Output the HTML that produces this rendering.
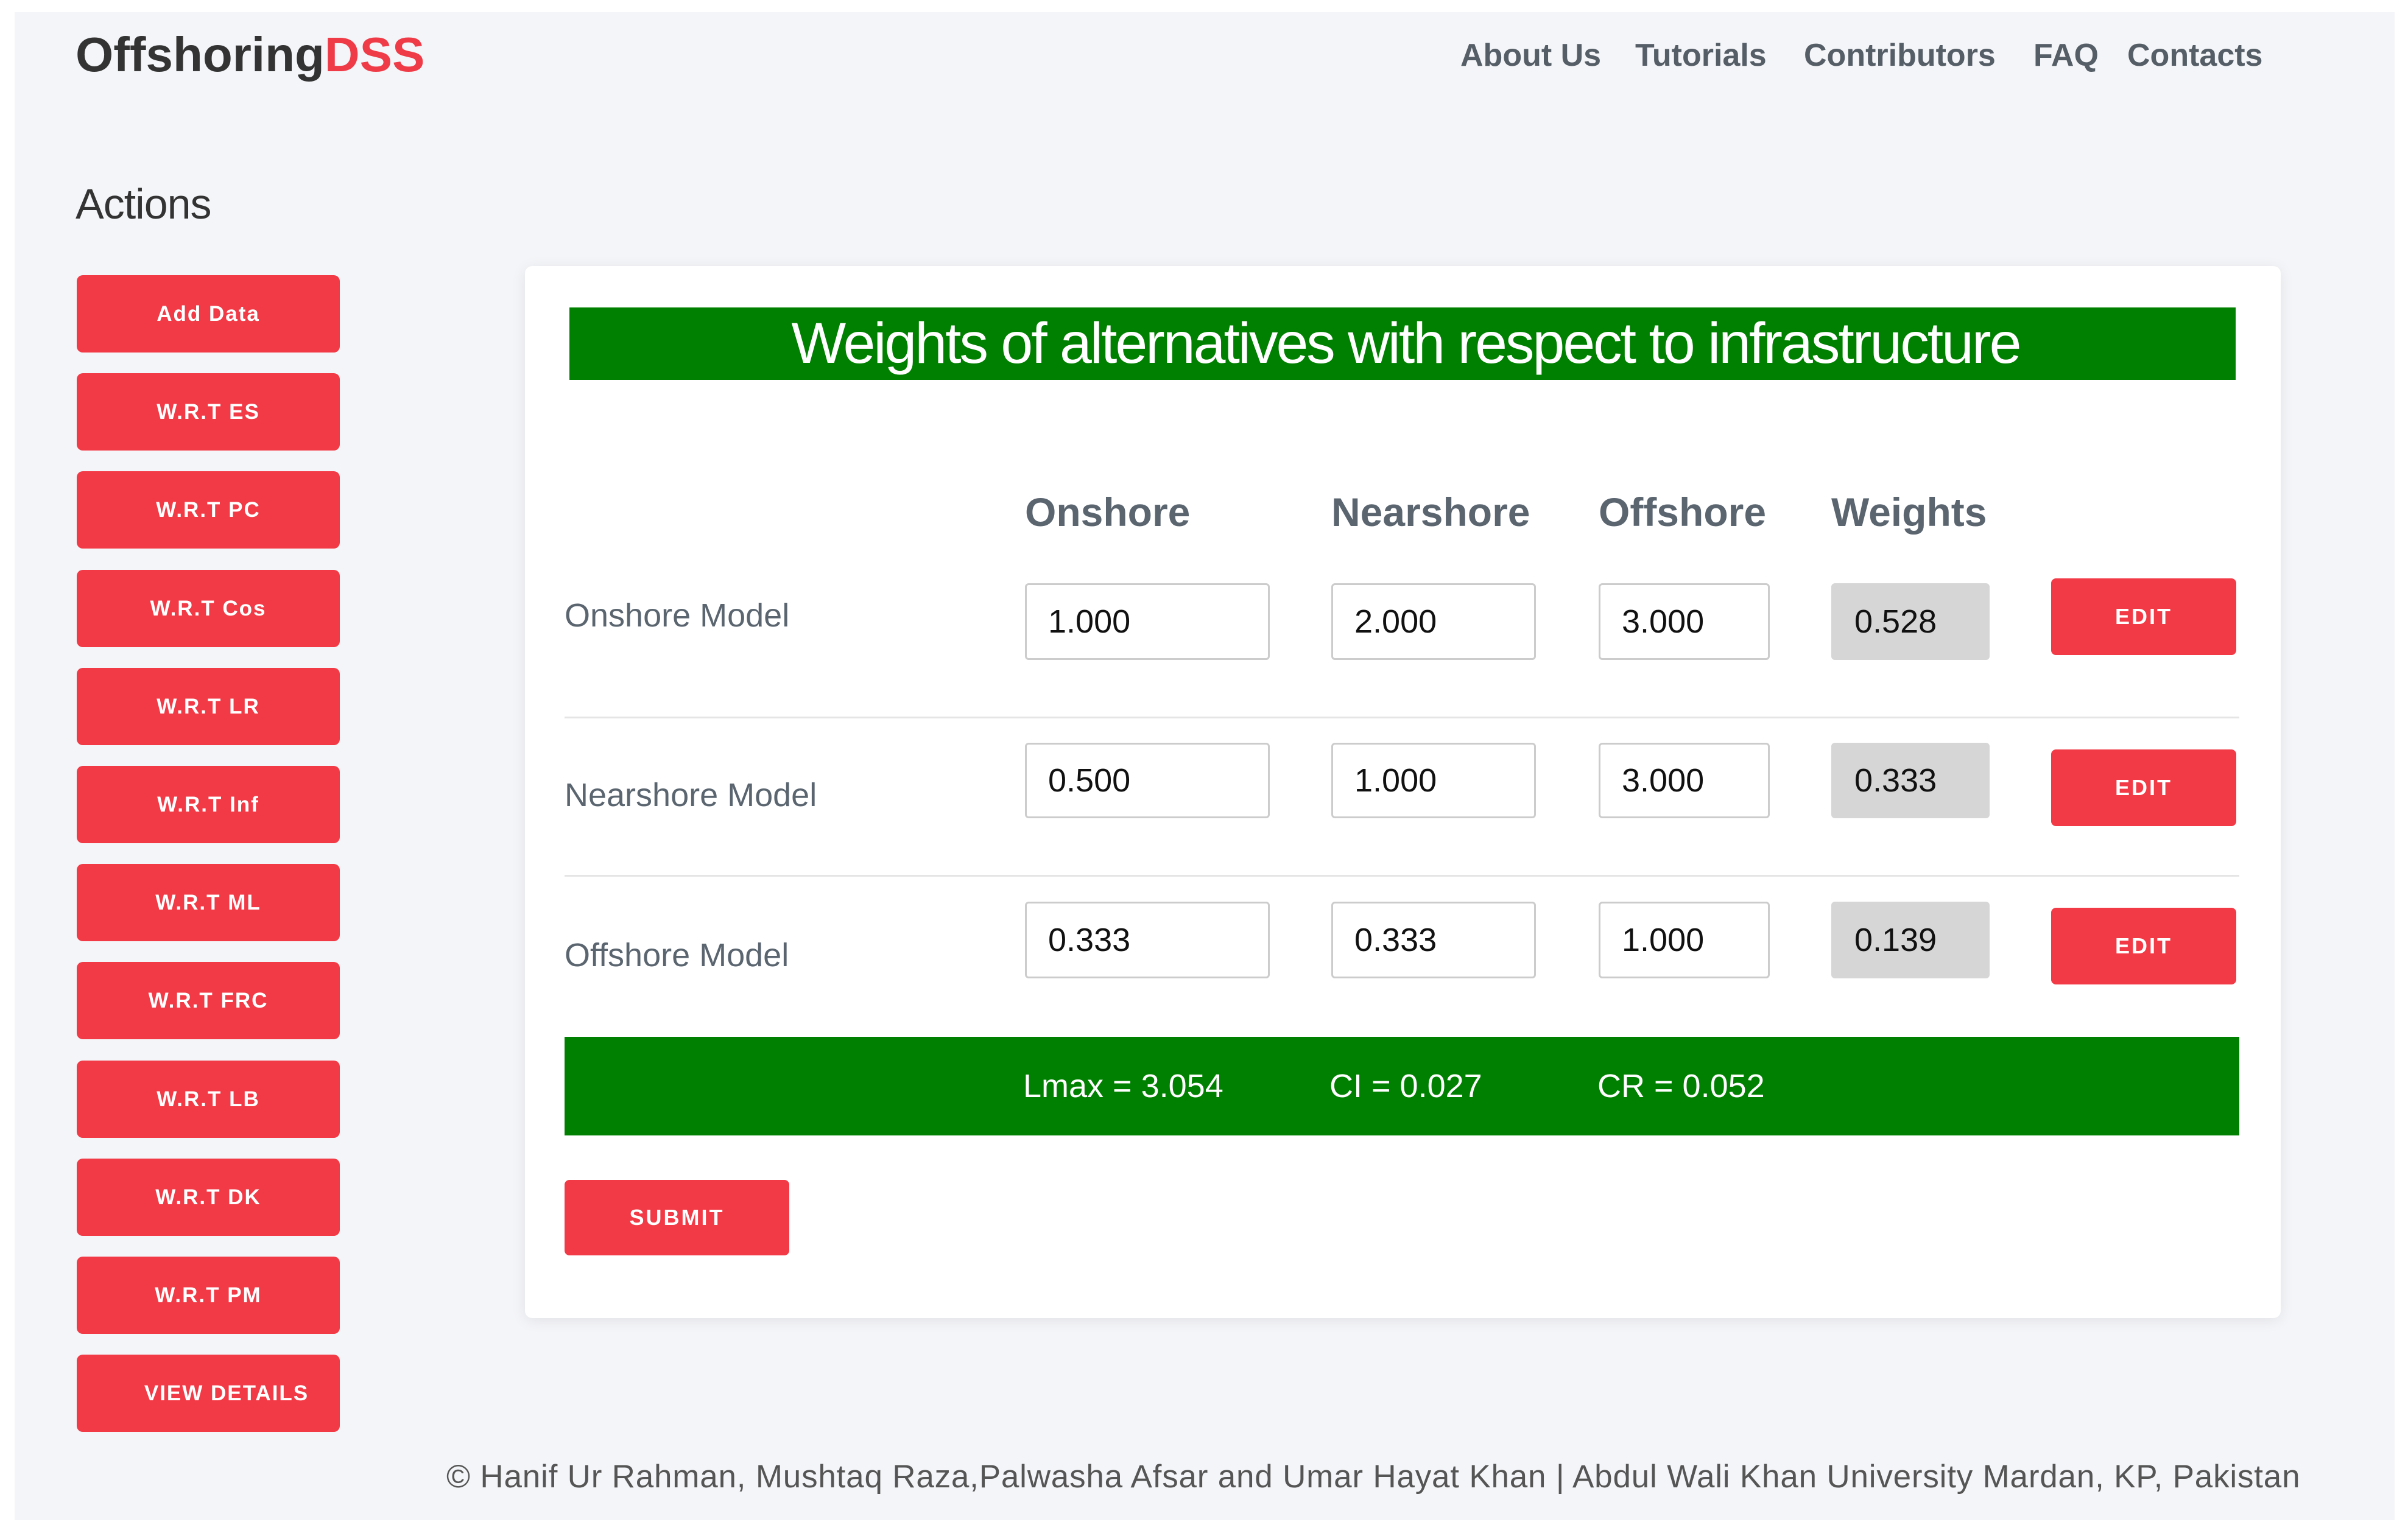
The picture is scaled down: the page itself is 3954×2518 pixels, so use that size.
<!DOCTYPE html>
<html><head><meta charset="utf-8"><style>
*{margin:0;padding:0;box-sizing:border-box}
body{width:3954px;height:2518px;background:#fff;position:relative;font-family:"Liberation Sans",Arial,sans-serif;overflow:hidden}
.abs{position:absolute}
#bg{left:24px;top:20px;width:3908px;height:2477px;background:#f4f5f8}
.logo{left:124px;top:40px;font-size:80px;font-weight:bold;color:#333;letter-spacing:0;line-height:100px}
.logo span{color:#ef3b47}
.nav{top:60px;font-size:52px;font-weight:bold;color:#555d66;line-height:62px}
.actions{left:124px;top:290px;font-size:70px;color:#333;letter-spacing:-1px;line-height:90px}
.sb{left:126px;width:432px;height:127px;background:#f23a46;border-radius:10px;color:#fff;font-weight:bold;font-size:35px;letter-spacing:2px;display:flex;align-items:center;justify-content:center}
.card{left:862px;top:437px;width:2883px;height:1728px;background:#fff;border-radius:12px;box-shadow:0 4px 24px rgba(0,0,0,0.08)}
.title{left:935px;top:505px;width:2736px;height:119px;background:#008000;color:#fff;font-size:95px;letter-spacing:-3px;display:flex;align-items:center;justify-content:center;padding-left:10px}
.hd{top:805px;font-size:66px;font-weight:bold;color:#5a6570;line-height:72px}
.lbl{left:927px;font-size:54px;color:#5a6570;line-height:60px}
.in{border:3px solid #ccc;border-radius:6px;background:#fff;font-size:54px;color:#111;padding-left:35px;display:flex;align-items:center}
.w{background:#d6d6d6;border-color:#d6d6d6}
.edit{left:3368px;width:304px;height:126px;background:#f23a46;border-radius:8px;color:#fff;font-weight:bold;font-size:36px;letter-spacing:3px;display:flex;align-items:center;justify-content:center}
.hr{left:927px;width:2750px;height:3px;background:#e5e5e5}
.bar{left:927px;top:1703px;width:2750px;height:162px;background:#008000}
.bt{top:1754px;font-size:54px;color:#fff;line-height:60px}
.foot{left:733px;top:2396px;font-size:53px;color:#555;line-height:60px;white-space:nowrap;letter-spacing:0.8px}
</style></head><body>
<div id="bg" class="abs"></div>
<div class="abs logo">Offshoring<span>DSS</span></div>
<div class="abs nav" style="left:2398px">About Us</div>
<div class="abs nav" style="left:2685px">Tutorials</div>
<div class="abs nav" style="left:2962px">Contributors</div>
<div class="abs nav" style="left:3339px">FAQ</div>
<div class="abs nav" style="left:3493px">Contacts</div>
<div class="abs actions">Actions</div>

<div class="abs sb" style="top:452px">Add Data</div>
<div class="abs sb" style="top:613px">W.R.T ES</div>
<div class="abs sb" style="top:774px">W.R.T PC</div>
<div class="abs sb" style="top:936px">W.R.T Cos</div>
<div class="abs sb" style="top:1097px">W.R.T LR</div>
<div class="abs sb" style="top:1258px">W.R.T Inf</div>
<div class="abs sb" style="top:1419px">W.R.T ML</div>
<div class="abs sb" style="top:1580px">W.R.T FRC</div>
<div class="abs sb" style="top:1742px">W.R.T LB</div>
<div class="abs sb" style="top:1903px">W.R.T DK</div>
<div class="abs sb" style="top:2064px">W.R.T PM</div>
<div class="abs sb" style="top:2225px;padding-left:60px">VIEW DETAILS</div>

<div class="abs card"></div>
<div class="abs title">Weights of alternatives with respect to infrastructure</div>

<div class="abs hd" style="left:1683px">Onshore</div>
<div class="abs hd" style="left:2186px">Nearshore</div>
<div class="abs hd" style="left:2625px">Offshore</div>
<div class="abs hd" style="left:3007px">Weights</div>

<div class="abs lbl" style="top:981px">Onshore Model</div>
<div class="abs in" style="left:1683px;top:958px;width:402px;height:126px">1.000</div>
<div class="abs in" style="left:2186px;top:958px;width:336px;height:126px">2.000</div>
<div class="abs in" style="left:2625px;top:958px;width:281px;height:126px">3.000</div>
<div class="abs in w" style="left:3007px;top:958px;width:260px;height:126px">0.528</div>
<div class="abs edit" style="top:950px">EDIT</div>
<div class="abs hr" style="top:1177px"></div>

<div class="abs lbl" style="top:1276px">Nearshore Model</div>
<div class="abs in" style="left:1683px;top:1220px;width:402px;height:124px">0.500</div>
<div class="abs in" style="left:2186px;top:1220px;width:336px;height:124px">1.000</div>
<div class="abs in" style="left:2625px;top:1220px;width:281px;height:124px">3.000</div>
<div class="abs in w" style="left:3007px;top:1220px;width:260px;height:124px">0.333</div>
<div class="abs edit" style="top:1231px">EDIT</div>
<div class="abs hr" style="top:1437px"></div>

<div class="abs lbl" style="top:1539px">Offshore Model</div>
<div class="abs in" style="left:1683px;top:1481px;width:402px;height:126px">0.333</div>
<div class="abs in" style="left:2186px;top:1481px;width:336px;height:126px">0.333</div>
<div class="abs in" style="left:2625px;top:1481px;width:281px;height:126px">1.000</div>
<div class="abs in w" style="left:3007px;top:1481px;width:260px;height:126px">0.139</div>
<div class="abs edit" style="top:1491px">EDIT</div>

<div class="abs bar"></div>
<div class="abs bt" style="left:1680px">Lmax = 3.054</div>
<div class="abs bt" style="left:2183px">CI = 0.027</div>
<div class="abs bt" style="left:2623px">CR = 0.052</div>

<div class="abs edit" style="left:927px;top:1938px;width:369px;height:124px">SUBMIT</div>

<div class="abs foot">© Hanif Ur Rahman, Mushtaq Raza,Palwasha Afsar and Umar Hayat Khan | Abdul Wali Khan University Mardan, KP, Pakistan</div>
</body></html>
